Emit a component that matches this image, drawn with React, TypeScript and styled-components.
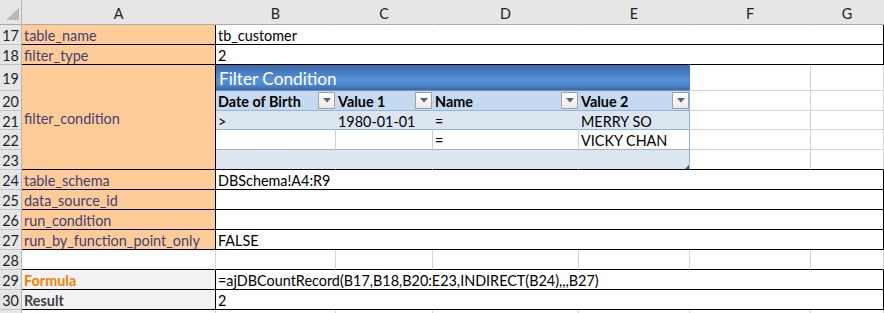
import React from 'react';
import styled, { createGlobalStyle } from 'styled-components';

const GlobalStyle = createGlobalStyle`
  html, body {
    margin: 0;
    padding: 0;
    background: #ffffff;
  }
  body {
    font-family: Lato, "Liberation Sans", sans-serif;
    font-size: 14.4px;
    color: #000000;
    overflow: hidden;
  }
`;

const GRID = '#d4d4d4';
const BLACK = '#000000';
const TABLE_LINE = '#95b3d7';
const BAND = '#dce6f1';

const Sheet = styled.div`
  display: grid;
  grid-template-columns: 22px 194px 120px 97px 146px 111px 121px 73px;
  grid-template-rows: 25px 20px 20px 26px 20px 19px 20px 20px repeat(7, 20px) 20px;
  width: 884px;
  height: 313px;
  overflow: hidden;
`;

type CellProps = {
  $c: string;
  $r: string;
  $rb?: string;
  $bb?: string;
};

const Cell = styled.div<CellProps>`
  grid-column: ${p => p.$c};
  grid-row: ${p => p.$r};
  box-sizing: border-box;
  position: relative;
  display: flex;
  align-items: center;
  min-width: 0;
  padding: 2px 2px 0;
  white-space: nowrap;
  overflow: hidden;
  background: #ffffff;
  border-right: 1px solid ${p => p.$rb ?? GRID};
  border-bottom: 1px solid ${p => p.$bb ?? GRID};
`;

const Corner = styled(Cell)`
  background: #e6e6e6;
  border-right-color: #b5b5b5;
  border-bottom-color: #ababab;
  padding: 0;
  justify-content: flex-end;
  align-items: flex-end;
  svg {
    margin: 0 2px 4px 0;
  }
`;

const ColHead = styled(Cell)`
  background: #e6e6e6;
  justify-content: center;
  color: #222222;
  border-right-color: transparent;
  border-bottom-color: #ababab;
  &::after {
    content: '';
    position: absolute;
    right: -1px;
    top: 5px;
    bottom: 0;
    width: 1px;
    background: #c6c6c6;
  }
`;

const RowHead = styled(Cell)`
  background: #e6e6e6;
  justify-content: center;
  color: #1f1f1f;
  padding: 2px 0 0;
  border-right-color: #b5b5b5;
  border-bottom-color: #c4c4c4;
`;

const InputLabel = styled(Cell)`
  background: #ffcc99;
  color: #3f3f76;
`;

const CalcLabel = styled(Cell)<{ $tone: string }>`
  background: #f2f2f2;
  color: ${p => p.$tone};
  font-weight: 700;
`;

const TableTitle = styled(Cell)`
  background: linear-gradient(
    to bottom,
    #3a69a9 0%,
    #4779bd 25%,
    #5891d9 58%,
    #4f86cc 80%,
    #3a66a3 100%
  );
  color: #ffffff;
  font-size: 17.2px;
  padding: 1px 3px 0;
  border-right-color: transparent;
  border-bottom-color: #6b8fc0;
`;

const TableHead = styled(Cell)`
  background: #c5d9f1;
  font-weight: 700;
  justify-content: space-between;
  padding-right: 0;
  border-bottom-color: ${TABLE_LINE};
`;

const TableCell = styled(Cell)<{ $bg: string }>`
  background: ${p => p.$bg};
`;

const ResizeCell = styled(TableCell)`
  &::after {
    content: '';
    position: absolute;
    right: 0;
    bottom: 0;
    width: 0;
    height: 0;
    border-left: 4px solid transparent;
    border-bottom: 4px solid #3a55a4;
  }
`;

const FilterButton = styled.span`
  box-sizing: border-box;
  width: 17px;
  height: 17px;
  margin-top: -2px;
  flex-shrink: 0;
  display: flex;
  align-items: center;
  justify-content: center;
  border: 1px solid #a3a3a3;
  background: linear-gradient(#fdfdfd, #ebebeb);
`;

const CornerMark = () => (
  <svg width="13" height="12" viewBox="0 0 13 12">
    <polygon points="13,0 13,12 0,12" fill="#b8b8b8" />
  </svg>
);

const Filter = () => (
  <FilterButton>
    <svg width="8" height="5" viewBox="0 0 8 5">
      <polygon points="0,0 8,0 4,4.5" fill="#616161" />
    </svg>
  </FilterButton>
);

const letters = ['A', 'B', 'C', 'D', 'E', 'F', 'G'];
const rowNumbers = [17, 18, 19, 20, 21, 22, 23, 24, 25, 26, 27, 28, 29, 30];

const inputRows: { row: number; label: string; value: string }[] = [
  { row: 2, label: 'table_name', value: 'tb_customer' },
  { row: 3, label: 'filter_type', value: '2' },
  { row: 9, label: 'table_schema', value: 'DBSchema!A4:R9' },
  { row: 10, label: 'data_source_id', value: '' },
  { row: 11, label: 'run_condition', value: '' },
  { row: 12, label: 'run_by_function_point_only', value: 'FALSE' },
];

const headers = ['Date of Birth', 'Value 1', 'Name', 'Value 2'];

const bodyRows: { row: number; bg: string; cells: string[]; inner: string; bottom: string }[] = [
  { row: 6, bg: BAND, cells: ['>', '1980-01-01', '=', 'MERRY SO'], inner: BAND, bottom: TABLE_LINE },
  { row: 7, bg: '#ffffff', cells: ['', '', '=', 'VICKY CHAN'], inner: '#c3d3e8', bottom: TABLE_LINE },
];

const App: React.FC = () => {
  return (
    <>
      <GlobalStyle />
      <Sheet>
        <Corner $c="1" $r="1">
          <CornerMark />
        </Corner>
        {letters.map((l, i) => (
          <ColHead key={l} $c={String(i + 2)} $r="1">
            {l}
          </ColHead>
        ))}
        {rowNumbers.map((n, i) => (
          <RowHead key={n} $c="1" $r={String(i + 2)}>
            {n}
          </RowHead>
        ))}
        <RowHead $c="1" $r="16" />

        {inputRows.map(r => (
          <React.Fragment key={r.row}>
            <InputLabel $c="2" $r={String(r.row)} $rb={BLACK} $bb={BLACK}>
              {r.label}
            </InputLabel>
            <Cell $c="3 / 9" $r={String(r.row)} $rb={BLACK} $bb={BLACK}>
              {r.value}
            </Cell>
          </React.Fragment>
        ))}

        <InputLabel $c="2" $r="4 / 9" $rb={BLACK} $bb={BLACK}>
          filter_condition
        </InputLabel>

        <TableTitle $c="3 / 7" $r="4">
          Filter Condition
        </TableTitle>
        {headers.map((h, i) => (
          <TableHead
            key={h}
            $c={String(i + 3)}
            $r="5"
            $rb={i === 3 ? TABLE_LINE : '#c5d9f1'}
          >
            {h}
            <Filter />
          </TableHead>
        ))}
        {bodyRows.map(r =>
          r.cells.map((t, i) => (
            <TableCell
              key={`${r.row}-${i}`}
              $c={String(i + 3)}
              $r={String(r.row)}
              $bg={r.bg}
              $rb={i === 3 ? TABLE_LINE : r.inner}
              $bb={r.bottom}
            >
              {t}
            </TableCell>
          ))
        )}
        {[0, 1, 2].map(i => (
          <TableCell key={`b${i}`} $c={String(i + 3)} $r="8" $bg={BAND} $rb={BAND} $bb={BLACK} />
        ))}
        <ResizeCell $c="6" $r="8" $bg={BAND} $rb={TABLE_LINE} $bb={BLACK} />

        {[4, 5, 6, 7, 8].map(r => (
          <React.Fragment key={`fg${r}`}>
            <Cell $c="7" $r={String(r)} $bb={r === 8 ? BLACK : GRID} />
            <Cell $c="8" $r={String(r)} $bb={r === 8 ? BLACK : GRID} />
          </React.Fragment>
        ))}

        {[2, 3, 4, 5, 6, 7, 8].map(c => (
          <Cell key={`r28-${c}`} $c={String(c)} $r="13" $bb={BLACK} />
        ))}

        <CalcLabel $c="2" $r="14" $tone="#fa7d00" $rb={BLACK} $bb={BLACK}>
          Formula
        </CalcLabel>
        <Cell $c="3 / 9" $r="14" $rb={BLACK} $bb={BLACK}>
          =ajDBCountRecord(B17,B18,B20:E23,INDIRECT(B24),,,B27)
        </Cell>
        <CalcLabel $c="2" $r="15" $tone="#3f3f3f" $rb={BLACK} $bb={BLACK}>
          Result
        </CalcLabel>
        <Cell $c="3 / 9" $r="15" $rb={BLACK} $bb={BLACK}>
          2
        </Cell>

        {[2, 3, 4, 5, 6, 7, 8].map(c => (
          <Cell key={`r31-${c}`} $c={String(c)} $r="16" />
        ))}
      </Sheet>
    </>
  );
};

export default App;
